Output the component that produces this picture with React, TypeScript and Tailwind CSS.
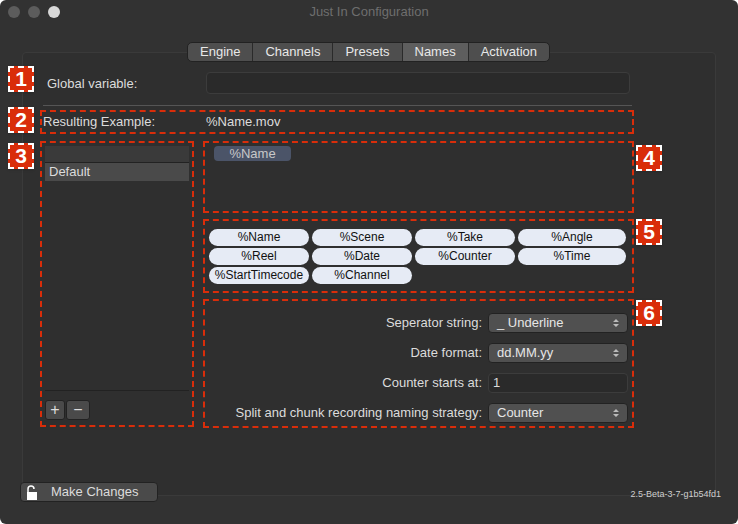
import React from "react";

const F = { fontFamily: '"Helvetica Neue", "Liberation Sans", Arial, sans-serif' };

function Badge({ n }: { n: string }) {
  return (
    <div className="w-[26px] h-[26px] bg-[#d92d0a] border-2 border-dashed border-white flex items-center justify-center text-white font-bold text-[21px] shadow">
      {n}
    </div>
  );
}

function Select({ v }: { v: string }) {
  return (
    <div className="w-[140px] h-[20px] rounded-[4px] bg-[#505050] border border-[#222] flex items-center justify-between px-2 text-[13px] text-[#e6e6e6]">
      <span>{v}</span>
      <svg width="6" height="10" viewBox="0 0 6 10"><path d="M0 4 L3 1 L6 4 Z M0 6 L3 9 L6 6 Z" fill="#bbb" /></svg>
    </div>
  );
}

const chips = ["%Name", "%Scene", "%Take", "%Angle", "%Reel", "%Date", "%Counter", "%Time", "%StartTimecode", "%Channel"];

export default function App() {
  return (
    <div style={F} className="w-[738px] h-[524px] bg-[#323232] rounded-[6px] overflow-hidden relative text-[#dcdcdc]">
      <div className="h-[24px] flex items-center px-[8px] relative">
        <div className="flex gap-[8px]">
          <div className="w-[12px] h-[12px] rounded-full bg-[#5c5c5c]" />
          <div className="w-[12px] h-[12px] rounded-full bg-[#5c5c5c]" />
          <div className="w-[12px] h-[12px] rounded-full bg-[#d8d8d8]" />
        </div>
        <div className="absolute inset-0 flex items-center justify-center text-[13px] text-[#6e6e6e]">Just In Configuration</div>
      </div>
      <div className="absolute left-[22px] top-[52px] w-[694px] h-[444px] bg-[#2f2f2f] border border-[#3a3a3a] rounded-[4px]" />
      <div className="absolute left-[187px] top-[42px] flex h-[20px] rounded-[5px] border border-[#222] bg-[#4e4e4e] text-[13px] text-[#e8e8e8] overflow-hidden">
        {["Engine", "Channels", "Presets", "Names", "Activation"].map((t, i) => (
          <div key={t} className={`px-[12px] flex items-center ${i > 0 ? "border-l border-[#2a2a2a]" : ""} ${t === "Names" ? "bg-[#5e5e5e]" : ""}`}>{t}</div>
        ))}
      </div>
      <div className="absolute left-[8px] top-[66px]"><Badge n="1" /></div>
      <div className="absolute left-[8px] top-[107px]"><Badge n="2" /></div>
      <div className="absolute left-[8px] top-[143px]"><Badge n="3" /></div>
      <div className="absolute left-[636px] top-[145px]"><Badge n="4" /></div>
      <div className="absolute left-[636px] top-[219px]"><Badge n="5" /></div>
      <div className="absolute left-[636px] top-[300px]"><Badge n="6" /></div>

      <div className="absolute left-[47px] top-[74px] text-[13px]">Global variable:</div>
      <div className="absolute left-[206px] top-[72px] w-[424px] h-[22px] rounded-[4px] bg-[#2a2a2a] border border-[#3c3c3c]" />
      <div className="absolute left-[43px] top-[105px] w-[589px] h-px bg-[#555]" />

      <div className="absolute left-[40px] top-[110px] w-[594px] h-[24px] border-2 border-dashed border-[#d92d0a] flex items-center text-[13px]">
        <span className="ml-[1px] w-[163px]">Resulting Example:</span>
        <span>%Name.mov</span>
      </div>

      <div className="absolute left-[40px] top-[141px] w-[154px] h-[286px] border-2 border-dashed border-[#d92d0a] p-[3px] flex flex-col">
        <div className="h-[17px] bg-[#3a3a3a] border-b border-[#222]" />
        <div className="h-[18px] bg-[#4a4a4a] text-[13px] px-[4px] flex items-center">Default</div>
        <div className="flex-1 border-b border-[#222]" />
        <div className="flex gap-[1px] mt-[9px] mb-[2px]">
          <div className="w-[20px] h-[20px] rounded-[3px] bg-[#4a4a4a] border border-[#222] flex items-center justify-center text-[16px]">+</div>
          <div className="w-[24px] h-[20px] rounded-[3px] bg-[#4a4a4a] border border-[#222] flex items-center justify-center text-[16px]">−</div>
        </div>
      </div>

      <div className="absolute left-[203px] top-[141px] w-[431px] h-[72px] border-2 border-dashed border-[#d92d0a] pl-[9px] pt-[3px]">
        <div className="w-[77px] h-[15px] rounded-[4px] bg-[#4b5468] text-[13px] leading-[15px] text-center text-[#c8c8c8]">%Name</div>
      </div>

      <div className="absolute left-[203px] top-[219px] w-[431px] h-[74px] border-2 border-dashed border-[#d92d0a] pt-[8px] pl-[4px]">
        <div className="grid grid-cols-[100px_100px_100px_108px] gap-x-[3px] gap-y-[2px]">
          {chips.map(c => (
            <div key={c} className="h-[17px] rounded-full bg-[#e6ebf5] text-[#111] text-[12px] leading-[17px] text-center">{c}</div>
          ))}
        </div>
      </div>

      <div className="absolute left-[203px] top-[299px] w-[431px] h-[129px] border-2 border-dashed border-[#d92d0a] flex flex-col items-end pr-[4px] pt-[12px] gap-[10px] text-[13px]">
        {[
          ["Seperator string:", <Select v="_ Underline" />],
          ["Date format:", <Select v="dd.MM.yy" />],
          ["Counter starts at:", <div className="w-[140px] h-[20px] rounded-[4px] bg-[#2a2a2a] border border-[#3c3c3c] px-[4px] flex items-center">1</div>],
          ["Split and chunk recording naming strategy:", <Select v="Counter" />],
        ].map(([l, c], i) => (
          <div key={i} className="flex items-center gap-[6px] h-[20px]">
            <span>{l}</span>{c}
          </div>
        ))}
      </div>

      <div className="absolute left-[20px] top-[482px] w-[138px] h-[20px] rounded-[4px] bg-[#4a4a4a] border border-[#222] flex items-center text-[13px]">
        <svg className="ml-[5px]" width="12" height="15" viewBox="0 0 12 15"><path d="M2 7 V4 a3 3 0 0 1 6 0" stroke="#fff" strokeWidth="1.5" fill="none" /><rect x="1" y="7" width="10" height="8" fill="#fff" /></svg>
        <span className="ml-[13px]">Make Changes</span>
      </div>
      <div className="absolute right-[17px] top-[488px] text-[9px] text-[#cfcfcf]">2.5-Beta-3-7-g1b54fd1</div>
    </div>
  );
}
